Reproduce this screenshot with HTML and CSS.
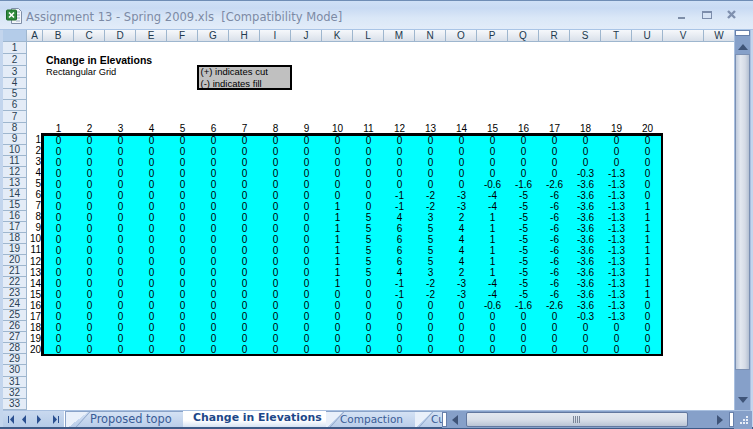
FILE: index.html
```html
<!DOCTYPE html>
<html lang="en">
<head>
<meta charset="utf-8">
<title>Assignment 13 - Spring 2009.xls [Compatibility Mode]</title>
<link rel="stylesheet" href="styles.css">
</head>
<body>
<div class="app">
  <header class="titlebar">
    <svg class="xl-icon" width="17" height="18" viewBox="0 0 17 18">
      <path d="M5.500 1.500h7l3 3v12h-10z" fill="#f4f6fa" stroke="#7f8fa8"/>
      <path d="M10 5h4M10 8h4M10 11h4M10 14h4" stroke="#9fb0c8"/>
      <rect x="0.500" y="3" width="10" height="10" rx="1" fill="#2f8a3c" stroke="#1c6a2a"/>
      <path d="M3 5.500l5 5M8 5.500l-5 5" stroke="#fff" stroke-width="1.600"/>
    </svg>
    <div class="doc-title">Assignment 13 - Spring 2009.xls  [Compatibility Mode]</div>
    <svg class="win-btns" width="62" height="12" viewBox="0 0 62 12">
      <rect x="0" y="7" width="7" height="2" fill="#7e8ea8"/>
      <rect x="24.500" y="1.500" width="9" height="7" fill="#d6e3f4" stroke="#7c8dab"/>
      <rect x="24" y="1" width="10" height="2" fill="#7c8dab"/>
      <path d="M50 1l7 7M57 1l-7 7" stroke="#7f90ae" stroke-width="2.400"/>
    </svg>
  </header>

  <main class="workspace">
    <div class="grid-area">
      <div class="col-heads">
        <div class="corner"></div>
        <div class="ch ch-a">A</div>
        <div class="ch">B</div><div class="ch">C</div><div class="ch">D</div><div class="ch">E</div><div class="ch">F</div>
        <div class="ch">G</div><div class="ch">H</div><div class="ch">I</div><div class="ch">J</div><div class="ch">K</div>
        <div class="ch">L</div><div class="ch">M</div><div class="ch">N</div><div class="ch">O</div><div class="ch">P</div>
        <div class="ch">Q</div><div class="ch">R</div><div class="ch">S</div><div class="ch">T</div><div class="ch">U</div>
        <div class="ch ch-v">V</div>
        <div class="ch ch-w">W</div>
      </div>
      <div class="sheet-body">
        <div class="row-heads">
          <div class="rh r12">1</div><div class="rh r12">2</div><div class="rh r12">3</div><div class="rh r11">4</div>
          <div class="rh r11">5</div><div class="rh r11">6</div><div class="rh r12">7</div><div class="rh r11">8</div>
          <div class="rh">9</div><div class="rh">10</div><div class="rh">11</div><div class="rh">12</div><div class="rh">13</div>
          <div class="rh">14</div><div class="rh">15</div><div class="rh">16</div><div class="rh">17</div><div class="rh">18</div>
          <div class="rh">19</div><div class="rh">20</div><div class="rh">21</div><div class="rh">22</div><div class="rh">23</div>
          <div class="rh">24</div><div class="rh">25</div><div class="rh">26</div><div class="rh">27</div><div class="rh">28</div>
          <div class="rh">29</div><div class="rh">30</div><div class="rh">31</div><div class="rh">32</div><div class="rh">33</div>
        </div>
        <div class="canvas">
          <div class="notes">
            <div class="heading">
              <div class="heading-main">Change in Elevations</div>
              <div class="heading-sub">Rectangular Grid</div>
            </div>
            <div class="legend">
              <div>(+) indicates cut</div>
              <div>(-) indicates fill</div>
            </div>
          </div>
          <div class="index-row">
            <span>1</span><span>2</span><span>3</span><span>4</span><span>5</span><span>6</span><span>7</span><span>8</span><span>9</span><span>10</span>
            <span>11</span><span>12</span><span>13</span><span>14</span><span>15</span><span>16</span><span>17</span><span>18</span><span>19</span><span>20</span>
          </div>
          <div class="data">
            <div class="labels">
              <div>1</div><div>2</div><div>3</div><div>4</div><div>5</div><div>6</div><div>7</div><div>8</div><div>9</div><div>10</div>
              <div>11</div><div>12</div><div>13</div><div>14</div><div>15</div><div>16</div><div>17</div><div>18</div><div>19</div><div>20</div>
            </div>
            <div class="matrix">
              <div class="mrows">
                <div class="mrow"><span>0</span><span>0</span><span>0</span><span>0</span><span>0</span><span>0</span><span>0</span><span>0</span><span>0</span><span>0</span><span>0</span><span>0</span><span>0</span><span>0</span><span>0</span><span>0</span><span>0</span><span>0</span><span>0</span><span>0</span></div>
                <div class="mrow"><span>0</span><span>0</span><span>0</span><span>0</span><span>0</span><span>0</span><span>0</span><span>0</span><span>0</span><span>0</span><span>0</span><span>0</span><span>0</span><span>0</span><span>0</span><span>0</span><span>0</span><span>0</span><span>0</span><span>0</span></div>
                <div class="mrow"><span>0</span><span>0</span><span>0</span><span>0</span><span>0</span><span>0</span><span>0</span><span>0</span><span>0</span><span>0</span><span>0</span><span>0</span><span>0</span><span>0</span><span>0</span><span>0</span><span>0</span><span>0</span><span>0</span><span>0</span></div>
                <div class="mrow"><span>0</span><span>0</span><span>0</span><span>0</span><span>0</span><span>0</span><span>0</span><span>0</span><span>0</span><span>0</span><span>0</span><span>0</span><span>0</span><span>0</span><span>0</span><span>0</span><span>0</span><span>-0.3</span><span>-1.3</span><span>0</span></div>
                <div class="mrow"><span>0</span><span>0</span><span>0</span><span>0</span><span>0</span><span>0</span><span>0</span><span>0</span><span>0</span><span>0</span><span>0</span><span>0</span><span>0</span><span>0</span><span>-0.6</span><span>-1.6</span><span>-2.6</span><span>-3.6</span><span>-1.3</span><span>0</span></div>
                <div class="mrow"><span>0</span><span>0</span><span>0</span><span>0</span><span>0</span><span>0</span><span>0</span><span>0</span><span>0</span><span>0</span><span>0</span><span>-1</span><span>-2</span><span>-3</span><span>-4</span><span>-5</span><span>-6</span><span>-3.6</span><span>-1.3</span><span>0</span></div>
                <div class="mrow"><span>0</span><span>0</span><span>0</span><span>0</span><span>0</span><span>0</span><span>0</span><span>0</span><span>0</span><span>1</span><span>0</span><span>-1</span><span>-2</span><span>-3</span><span>-4</span><span>-5</span><span>-6</span><span>-3.6</span><span>-1.3</span><span>1</span></div>
                <div class="mrow"><span>0</span><span>0</span><span>0</span><span>0</span><span>0</span><span>0</span><span>0</span><span>0</span><span>0</span><span>1</span><span>5</span><span>4</span><span>3</span><span>2</span><span>1</span><span>-5</span><span>-6</span><span>-3.6</span><span>-1.3</span><span>1</span></div>
                <div class="mrow"><span>0</span><span>0</span><span>0</span><span>0</span><span>0</span><span>0</span><span>0</span><span>0</span><span>0</span><span>1</span><span>5</span><span>6</span><span>5</span><span>4</span><span>1</span><span>-5</span><span>-6</span><span>-3.6</span><span>-1.3</span><span>1</span></div>
                <div class="mrow"><span>0</span><span>0</span><span>0</span><span>0</span><span>0</span><span>0</span><span>0</span><span>0</span><span>0</span><span>1</span><span>5</span><span>6</span><span>5</span><span>4</span><span>1</span><span>-5</span><span>-6</span><span>-3.6</span><span>-1.3</span><span>1</span></div>
                <div class="mrow"><span>0</span><span>0</span><span>0</span><span>0</span><span>0</span><span>0</span><span>0</span><span>0</span><span>0</span><span>1</span><span>5</span><span>6</span><span>5</span><span>4</span><span>1</span><span>-5</span><span>-6</span><span>-3.6</span><span>-1.3</span><span>1</span></div>
                <div class="mrow"><span>0</span><span>0</span><span>0</span><span>0</span><span>0</span><span>0</span><span>0</span><span>0</span><span>0</span><span>1</span><span>5</span><span>6</span><span>5</span><span>4</span><span>1</span><span>-5</span><span>-6</span><span>-3.6</span><span>-1.3</span><span>1</span></div>
                <div class="mrow"><span>0</span><span>0</span><span>0</span><span>0</span><span>0</span><span>0</span><span>0</span><span>0</span><span>0</span><span>1</span><span>5</span><span>4</span><span>3</span><span>2</span><span>1</span><span>-5</span><span>-6</span><span>-3.6</span><span>-1.3</span><span>1</span></div>
                <div class="mrow"><span>0</span><span>0</span><span>0</span><span>0</span><span>0</span><span>0</span><span>0</span><span>0</span><span>0</span><span>1</span><span>0</span><span>-1</span><span>-2</span><span>-3</span><span>-4</span><span>-5</span><span>-6</span><span>-3.6</span><span>-1.3</span><span>1</span></div>
                <div class="mrow"><span>0</span><span>0</span><span>0</span><span>0</span><span>0</span><span>0</span><span>0</span><span>0</span><span>0</span><span>0</span><span>0</span><span>-1</span><span>-2</span><span>-3</span><span>-4</span><span>-5</span><span>-6</span><span>-3.6</span><span>-1.3</span><span>1</span></div>
                <div class="mrow"><span>0</span><span>0</span><span>0</span><span>0</span><span>0</span><span>0</span><span>0</span><span>0</span><span>0</span><span>0</span><span>0</span><span>0</span><span>0</span><span>0</span><span>-0.6</span><span>-1.6</span><span>-2.6</span><span>-3.6</span><span>-1.3</span><span>0</span></div>
                <div class="mrow"><span>0</span><span>0</span><span>0</span><span>0</span><span>0</span><span>0</span><span>0</span><span>0</span><span>0</span><span>0</span><span>0</span><span>0</span><span>0</span><span>0</span><span>0</span><span>0</span><span>0</span><span>-0.3</span><span>-1.3</span><span>0</span></div>
                <div class="mrow"><span>0</span><span>0</span><span>0</span><span>0</span><span>0</span><span>0</span><span>0</span><span>0</span><span>0</span><span>0</span><span>0</span><span>0</span><span>0</span><span>0</span><span>0</span><span>0</span><span>0</span><span>0</span><span>0</span><span>0</span></div>
                <div class="mrow"><span>0</span><span>0</span><span>0</span><span>0</span><span>0</span><span>0</span><span>0</span><span>0</span><span>0</span><span>0</span><span>0</span><span>0</span><span>0</span><span>0</span><span>0</span><span>0</span><span>0</span><span>0</span><span>0</span><span>0</span></div>
                <div class="mrow"><span>0</span><span>0</span><span>0</span><span>0</span><span>0</span><span>0</span><span>0</span><span>0</span><span>0</span><span>0</span><span>0</span><span>0</span><span>0</span><span>0</span><span>0</span><span>0</span><span>0</span><span>0</span><span>0</span><span>0</span></div>
              </div>
            </div>
          </div>
        </div>
      </div>
    </div>
    <aside class="vscroll">
      <div class="split-v"></div>
      <svg class="arrow" width="10" height="6" viewBox="0 0 10 6"><path d="M5 0l5 6H0z" fill="#3f5478"/></svg>
      <div class="vthumb"></div>
      <svg class="arrow arrow-down" width="10" height="6" viewBox="0 0 10 6"><path d="M0 0h10L5 6z" fill="#3f5478"/></svg>
    </aside>
  </main>

  <footer class="bottombar">
    <div class="tab-nav">
      <svg width="52" height="9" viewBox="0 0 52 9" fill="#2a4f90">
        <rect x="0" y="1" width="1" height="7"/><path d="M6 0v9L2 4.500z"/>
        <path d="M18 0v9l-4-4.500z"/>
        <path d="M29 0v9l4-4.500z"/>
        <path d="M45 0v9l4-4.500z"/><rect x="50" y="1" width="1" height="7"/>
      </svg>
    </div>
    <div class="tabs">
      <div class="tab tab-first">Proposed topo</div>
      <div class="tab tab-active">Change in Elevations</div>
      <div class="tab tab-third">Compaction</div>
      <div class="tab tab-cut">Cut</div>
    </div>
    <div class="hscroll">
      <div class="split-h"></div>
      <svg class="h-arrow" width="6" height="10" viewBox="0 0 6 10"><path d="M6 0v10L0 5z" fill="#3f5478"/></svg>
      <div class="hthumb"><svg width="8" height="7" viewBox="0 0 8 7"><path d="M.5 0v7M2.500 0v7M4.500 0v7M6.500 0v7" stroke="#7b8698"/></svg></div>
      <svg class="h-arrow h-arrow-end" width="6" height="10" viewBox="0 0 6 10"><path d="M0 0l6 5-6 5z" fill="#3f5478"/></svg>
      <div class="split-h split-end"></div>
    </div>
    <svg class="sizer" width="18" height="18" viewBox="0 0 18 18" fill="#e8eef8">
      <rect x="12" y="5" width="2" height="2"/><rect x="9" y="8" width="2" height="2"/><rect x="12" y="8" width="2" height="2"/>
      <rect x="6" y="11" width="2" height="2"/><rect x="9" y="11" width="2" height="2"/><rect x="12" y="11" width="2" height="2"/>
    </svg>
  </footer>
</div>
</body>
</html>
```
FILE: styles.css
```css
* { box-sizing: border-box; }
html, body { margin: 0; padding: 0; }
body { width: 753px; height: 429px; overflow: hidden; font-family: "Liberation Sans", Arial, sans-serif; }

.app {
  width: 753px; height: 429px; display: flex; flex-direction: column;
  background: #c3d5ed;
  border-bottom: 2px solid #3e5a87;
}

.titlebar {
  height: 30px; flex: none; display: flex; align-items: center;
  border-top: 1px solid #6f8db5;
  border-bottom: 1px solid #a9c4e6;
  background: linear-gradient(#cfe0f6 0, #c8daf3 25%, #dae7f7 60%, #e2ecf9 100%);
  padding: 0 13px 0 6px;
}
.xl-icon { flex: none; margin-top: 1px; }
.doc-title {
  margin-left: 3px; flex: 1; white-space: pre; color: #7c8aa5;
  font: 11.560px/18px "DejaVu Sans", sans-serif; margin-top: 3px;
}
.win-btns { flex: none; margin-top: 2px; }

.workspace { height: 380px; flex: none; display: flex; margin: 0 2px 0 3px; }
.grid-area { width: 731px; flex: none; display: flex; flex-direction: column; overflow: hidden; }

.col-heads { height: 11.500px; flex: none; display: flex; }
.corner { width: 24px; flex: none; background: #b4cce9; border-right: 1px solid #9eb6ce; border-bottom: 1px solid #9eb6ce; }
.ch {
  width: 31px; flex: none; text-align: center; color: #21394d;
  font-size: 10px; line-height: 12px;
  background: linear-gradient(#f6f8fb, #d9e0ea);
  border-right: 1px solid #9eb6ce; border-bottom: 1px solid #9eb6ce;
}
.ch-a { width: 16px; }
.ch-v { width: 41px; }
.ch-w { width: 30px; flex: 1; border-right: 0; }

.sheet-body { display: flex; flex: 1; }
.row-heads { width: 24px; flex: none; background: #e4ecf7; }
.rh {
  height: 11.050px; text-align: center; color: #2a3e52;
  font-size: 10px; line-height: 10.500px;
  border-right: 1px solid #9eb6ce; border-bottom: 1px solid #9eb6ce;
}
.r12 { height: 12px; line-height: 11.500px; }
.r11 { height: 11px; }

.canvas { flex: 1; background: #fff; color: #000; font-size: 10px; display: flex; flex-direction: column; }

.notes { height: 81px; flex: none; display: flex; padding-left: 19px; }
.heading { width: 150.500px; padding-top: 12px; }
.heading-main { font-weight: bold; font-size: 10.500px; line-height: 12px; }
.heading-sub { line-height: 12px; font-size: 9.300px; }
.legend {
  width: 95px; height: 25px; margin-top: 23px;
  background: #c0c0c0; border: 2.500px solid #000;
  padding-left: 2px; line-height: 12px; white-space: nowrap; overflow: hidden; font-size: 9.500px;
}
.legend div:first-child { margin-top: -1px; }

.index-row { height: 11px; flex: none; display: flex; padding-left: 16px; line-height: 11px; }
.index-row span { width: 31px; flex: none; text-align: center; }

.data { display: flex; flex: none; margin-top: -0.500px; }
.labels { width: 14px; flex: none; text-align: right; line-height: 11px; padding-top: 1px; }
.labels div { height: 11.050px; }
.matrix {
  width: 622px; height: 223px; flex: none; background: #00ffff;
  border-style: solid; border-color: #000; border-width: 3px 2px 2px 3px;
}
.mrows { margin: -1.500px 0 0 -1px; }
.mrow { height: 11.050px; display: flex; line-height: 12px; }
.mrow span { width: 31px; flex: none; text-align: center; }

.vscroll {
  width: 17px; flex: none; display: flex; flex-direction: column; align-items: center;
  background: #86a0c9; border-left: 1px solid #a8bfdf; border-right: 1px solid #a8bfdf;
}
.split-v { width: 15px; height: 6px; flex: none; background: #fff; border: 1px solid #6780ab; }
.arrow { flex: none; margin: 8px 0 4px; }
.vthumb {
  width: 15px; height: 316px; flex: none;
  background: linear-gradient(90deg, #c0cbdc, #e3e8f0 35%, #d5dbe6 70%, #b4c0d2);
  border: 1px solid #7b90b3;
}
.arrow-down { margin: 27px 0 0; }

.bottombar { flex: 1; display: flex; margin: 0 2px 0 3px; border-top: 1px solid #a9c0e0; min-height: 0; }
.tab-nav {
  width: 62px; flex: none; display: flex; align-items: center; justify-content: center;
  background: linear-gradient(#c9d9ef, #b5cbe8); border-right: 1px solid #fff;
}
.tabs {
  width: 377px; flex: none; display: flex; overflow: hidden;
  background: linear-gradient(#d6e3f5, #b9cde9);
  font-size: 11.500px; line-height: 14px; color: #3a5c96;
  font-family: "DejaVu Sans", sans-serif;
}
.tab { flex: none; position: relative; white-space: nowrap; height: 17px; }
.tab::before {
  content: ""; position: absolute; left: 0; top: 0; bottom: -2px; width: 16px;
  border-left: 1px solid #8aa3c8; transform: skewX(-42deg); transform-origin: 0 100%;
}
.tab-first {
  width: 118px; padding-left: 24px; border-top: 1px solid #8aa3c8; border-left: 1px solid #8aa3c8;
  font-size: 11.400px;
  background: linear-gradient(to bottom right, #e9f0fa 50%, transparent 50%) 0 0 / 22px 17px no-repeat;
}
.tab-first::before { left: 7px; }
.tab-active {
  width: 143px; padding-left: 10px; color: #1d4789; font-weight: bold; font-size: 10.900px;
  background: linear-gradient(#fff 55%, #cfdef2);
}
.tab-active::before { display: none; }
.tab-third {
  width: 89px; padding-left: 14px; border-top: 1px solid #8aa3c8; font-size: 10.500px;
  background: linear-gradient(to bottom right, #e9f0fa 50%, transparent 50%) 0 0 / 16px 17px no-repeat;
}
.tab-third::before { left: 1px; }
.tab-cut {
  width: 27px; padding-left: 16px; border-top: 1px solid #8aa3c8; font-size: 10.500px;
  background: linear-gradient(to bottom right, #e9f0fa 50%, transparent 50%) 0 0 / 16px 17px no-repeat;
}
.tab-cut::before { left: 1px; }

.hscroll { flex: 1; display: flex; align-items: center; background: #86a0c9; height: 17px; }
.split-h { width: 5px; height: 15px; flex: none; background: #fff; border: 1px solid #6780ab; }
.split-end { margin-left: 6px; }
.h-arrow { flex: none; margin: 0 8px 0 5px; }
.h-arrow-end { margin: 0 0 0 29px; }
.hthumb {
  width: 222px; height: 15px; flex: none; display: flex; align-items: center; justify-content: center;
  background: linear-gradient(#e3e8f0, #d9dfe9 50%, #b9c4d5);
  border: 1px solid #62789f; border-radius: 2px;
}
.sizer { flex: none; background: #86a0c9; height: 18px; }
```
